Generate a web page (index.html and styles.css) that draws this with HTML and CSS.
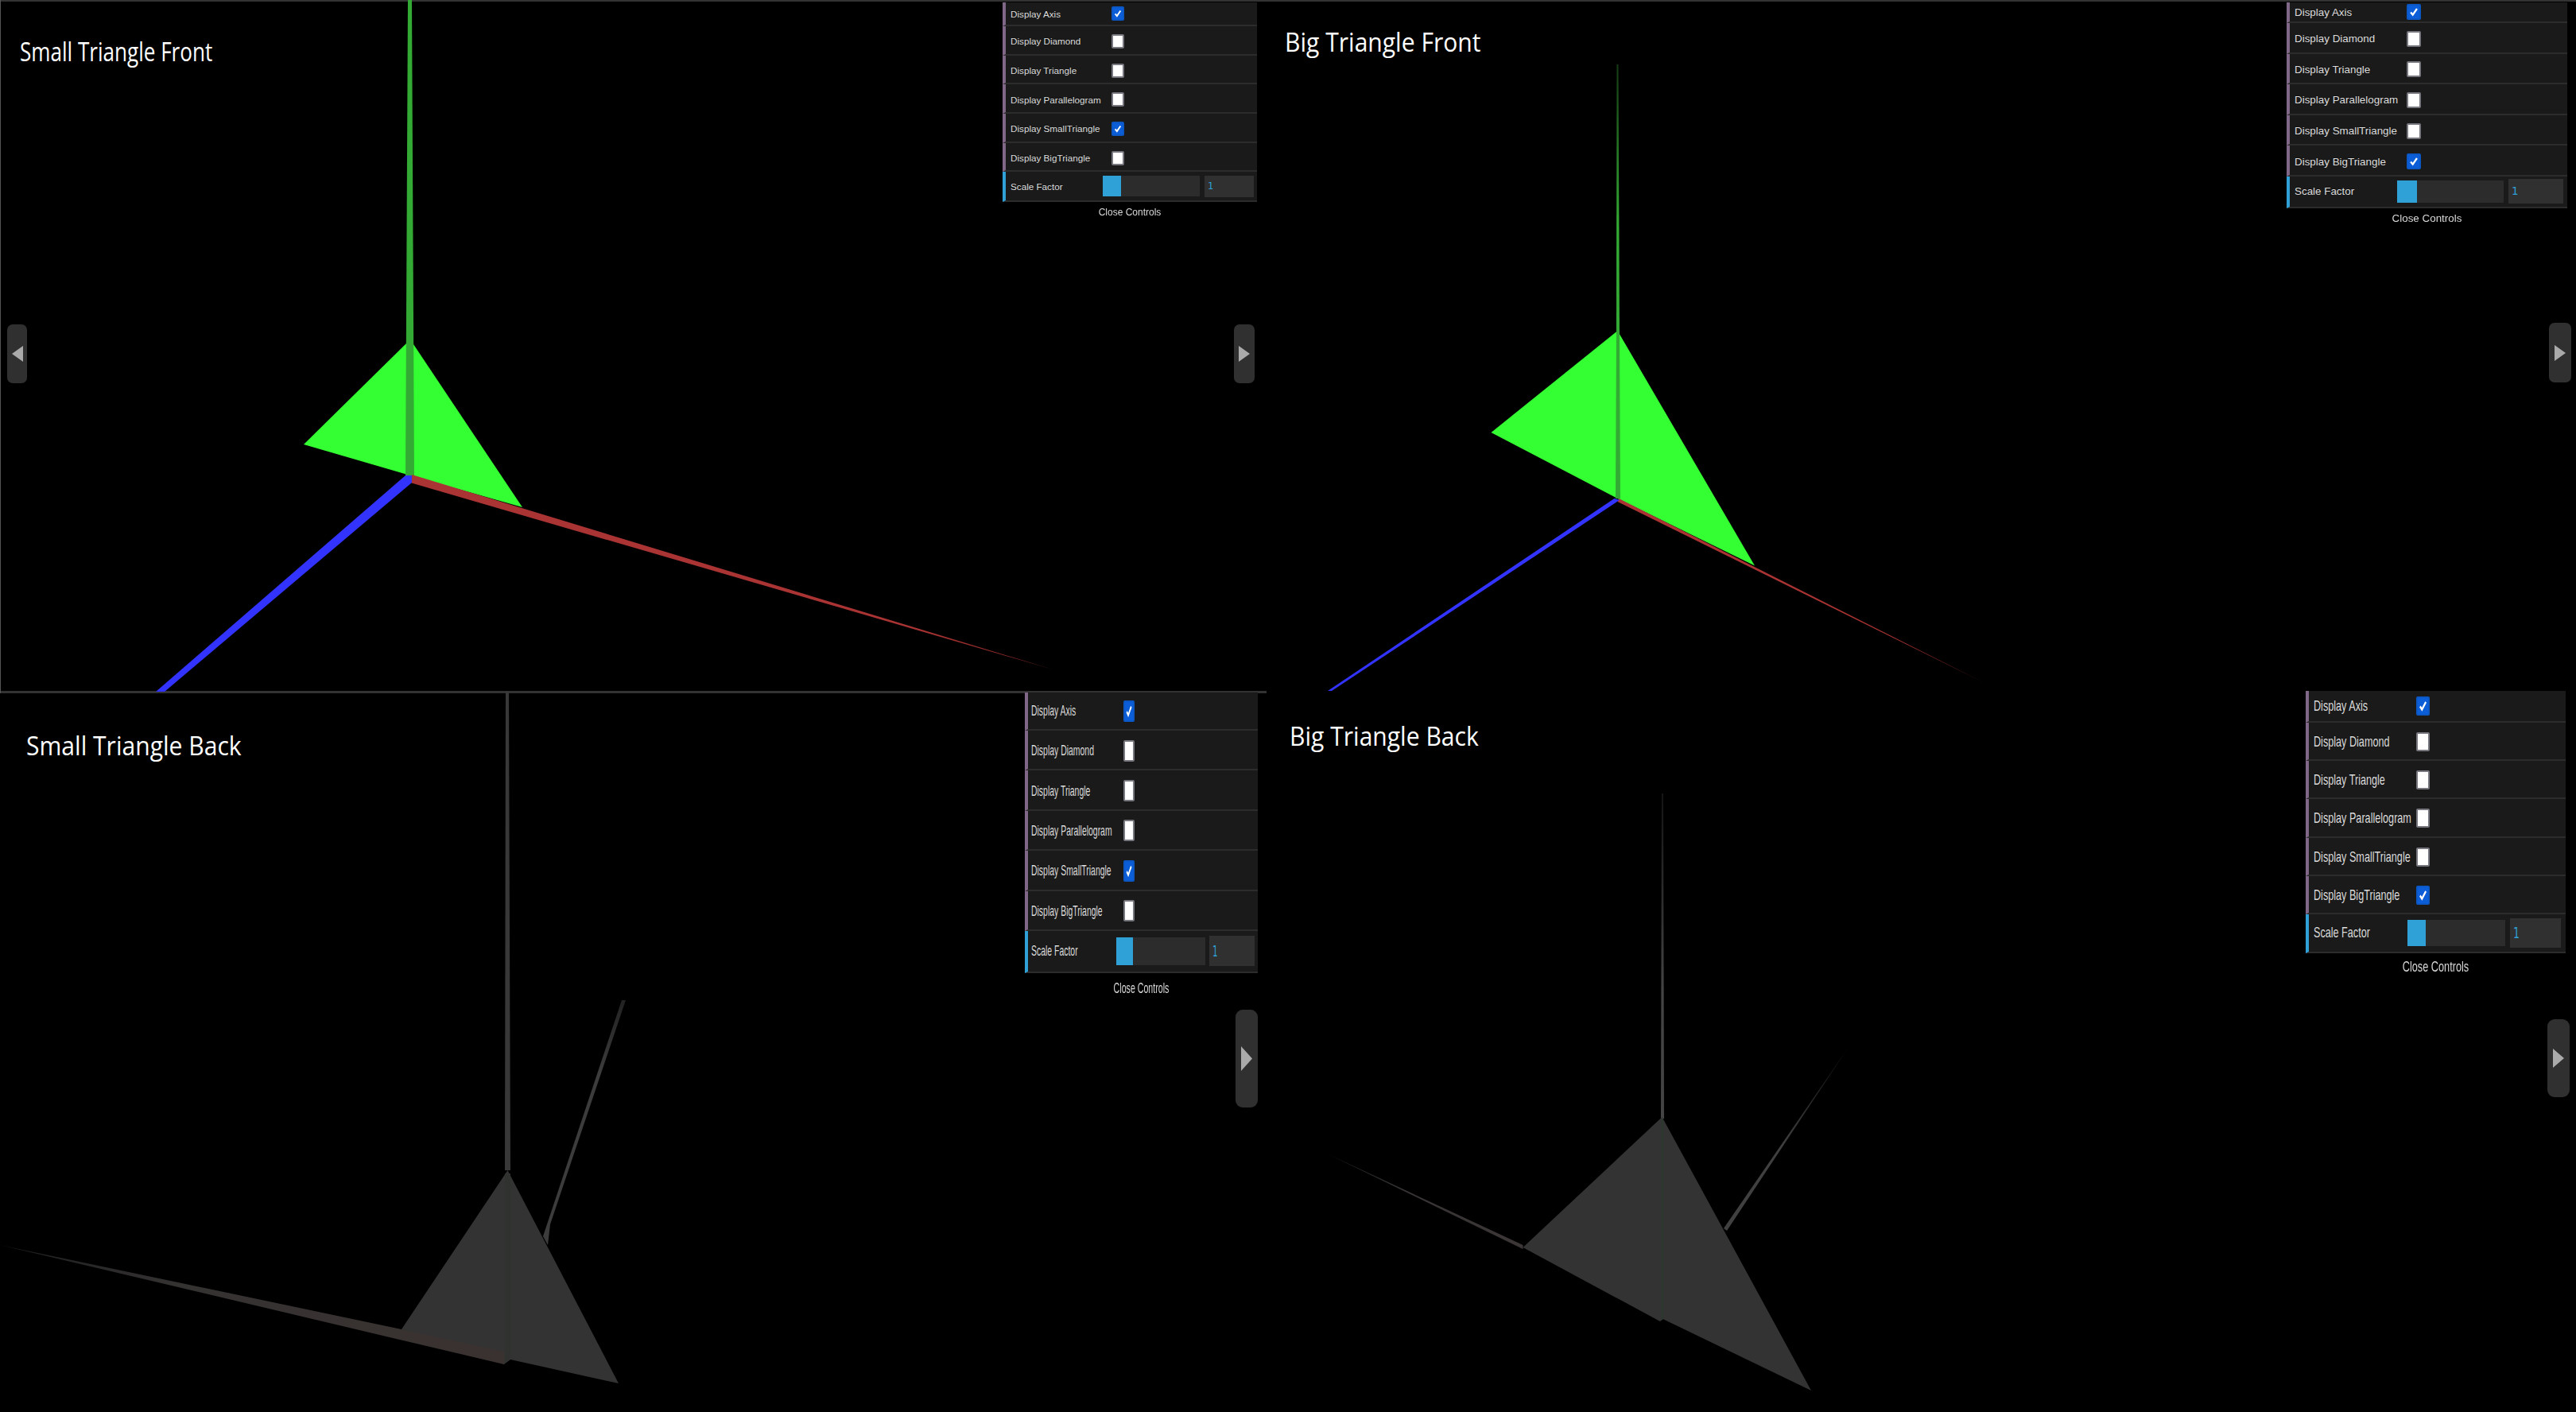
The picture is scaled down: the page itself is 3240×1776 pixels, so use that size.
FILE: index.html
```html
<!DOCTYPE html>
<html lang="en">
<head>
<meta charset="utf-8">
<title>Triangle views</title>
<link rel="stylesheet" href="styles.css">
</head>
<body>
<main class="quad">

<section class="pane pane-a">
  <svg class="scene" viewBox="0 0 1593 872">
    <defs>
      <linearGradient id="redA" gradientUnits="userSpaceOnUse" x1="518" y1="600" x2="1322" y2="841"><stop offset="0.8" stop-color="#aa3333"/><stop offset="1" stop-color="#7a2222"/></linearGradient>
    </defs>
    <polygon class="tri-green" points="516,427 657,638 516,598 382,559"/>
    <polygon class="axis-green" points="513,0 518,0 521,598 510,598"/>
    <polygon fill="url(#redA)" points="518,597 1324,842 516,607"/>
    <polygon class="axis-blue" points="510,598 518,598 518,607 207,870 196,870"/>
  </svg>
  <h2 class="title title-a">Small Triangle Front</h2>
  <span class="nav nav-a1"><svg viewBox="0 0 10 10" preserveAspectRatio="none"><polygon points="10,0 10,10 0,5"/></svg></span>
  <span class="nav nav-a2"><svg viewBox="0 0 10 10" preserveAspectRatio="none"><polygon points="0,0 0,10 10,5"/></svg></span>
  <aside class="gui gui-a">
    <div class="row"><span class="label">Display Axis</span><span class="check on"><svg viewBox="0 0 16 18" preserveAspectRatio="none"><polyline points="3.5,9.5 6.5,13 12.5,4.5"/></svg></span></div>
    <div class="row"><span class="label">Display Diamond</span><span class="check"></span></div>
    <div class="row"><span class="label">Display Triangle</span><span class="check"></span></div>
    <div class="row"><span class="label">Display Parallelogram</span><span class="check"></span></div>
    <div class="row"><span class="label">Display SmallTriangle</span><span class="check on"><svg viewBox="0 0 16 18" preserveAspectRatio="none"><polyline points="3.5,9.5 6.5,13 12.5,4.5"/></svg></span></div>
    <div class="row"><span class="label">Display BigTriangle</span><span class="check"></span></div>
    <div class="row scale"><span class="label">Scale Factor</span><span class="slider"><span class="fill"></span></span><span class="num"><span class="num-text">1</span></span></div>
    <div class="close">Close Controls</div>
  </aside>
</section>

<section class="pane pane-b">
  <svg class="scene" viewBox="1593 0 1647 872">
    <defs>
      <linearGradient id="greenB" gradientUnits="userSpaceOnUse" x1="2034" y1="81" x2="2034" y2="418"><stop offset="0" stop-color="#143a14"/><stop offset="0.6" stop-color="#33aa33"/></linearGradient>
      <linearGradient id="redB" gradientUnits="userSpaceOnUse" x1="2036" y1="627" x2="2490" y2="856"><stop offset="0.75" stop-color="#aa3333"/><stop offset="1" stop-color="#601a1a"/></linearGradient>
    </defs>
    <polygon class="tri-green" points="2034.5,416 2207,711.5 2034.5,627 1875.5,544"/>
    <polygon fill="url(#greenB)" points="2033.5,81 2035.5,81 2037,418 2033,418"/>
    <polygon class="axis-green" points="2033,418 2037,418 2038,627 2032,627"/>
    <polygon fill="url(#redB)" points="2036,627 2496,859 2034.5,631"/>
    <polygon class="axis-blue" points="2030.5,627 2037,629 1675,869 1670,869"/>
  </svg>
  <h2 class="title title-b">Big Triangle Front</h2>
  <span class="nav nav-b"><svg viewBox="0 0 10 10" preserveAspectRatio="none"><polygon points="0,0 0,10 10,5"/></svg></span>
  <aside class="gui gui-b">
    <div class="row"><span class="label">Display Axis</span><span class="check on"><svg viewBox="0 0 16 18" preserveAspectRatio="none"><polyline points="3.5,9.5 6.5,13 12.5,4.5"/></svg></span></div>
    <div class="row"><span class="label">Display Diamond</span><span class="check"></span></div>
    <div class="row"><span class="label">Display Triangle</span><span class="check"></span></div>
    <div class="row"><span class="label">Display Parallelogram</span><span class="check"></span></div>
    <div class="row"><span class="label">Display SmallTriangle</span><span class="check"></span></div>
    <div class="row"><span class="label">Display BigTriangle</span><span class="check on"><svg viewBox="0 0 16 18" preserveAspectRatio="none"><polyline points="3.5,9.5 6.5,13 12.5,4.5"/></svg></span></div>
    <div class="row scale"><span class="label">Scale Factor</span><span class="slider"><span class="fill"></span></span><span class="num"><span class="num-text">1</span></span></div>
    <div class="close">Close Controls</div>
  </aside>
</section>

<section class="pane pane-c">
  <svg class="scene" viewBox="0 872 1593 904">
    <defs>
      <linearGradient id="redC" gradientUnits="userSpaceOnUse" x1="0" y1="1567" x2="634" y2="1716"><stop offset="0" stop-color="#1c1c1c"/><stop offset="0.35" stop-color="#353232"/><stop offset="1" stop-color="#3a3230"/></linearGradient>
      <linearGradient id="blueC" gradientUnits="userSpaceOnUse" x1="785" y1="1258" x2="689" y2="1566"><stop offset="0" stop-color="#222222"/><stop offset="0.3" stop-color="#3c3c3c"/></linearGradient>
    </defs>
    <polygon fill="url(#blueC)" points="787,1258 692,1540 689,1566 683,1555 782,1258"/>
    <polygon class="axis-grey" points="636,870 640,870 642,1472 635,1472"/>
    <polygon class="tri-grey" points="638.5,1472 778,1740 642,1710 634,1716 505,1672"/>
    <polygon fill="url(#redC)" points="0,1566 505,1672 634,1700 634,1716"/>
    <polygon class="axis-inner" points="635,1476 642,1476 642,1708 635,1712"/>
  </svg>
  <h2 class="title title-c">Small Triangle Back</h2>
  <span class="nav nav-c"><svg viewBox="0 0 10 10" preserveAspectRatio="none"><polygon points="0,0 0,10 10,5"/></svg></span>
  <aside class="gui gui-c">
    <div class="row"><span class="label">Display Axis</span><span class="check on"><svg viewBox="0 0 16 18" preserveAspectRatio="none"><polyline points="3.5,9.5 6.5,13 12.5,4.5"/></svg></span></div>
    <div class="row"><span class="label">Display Diamond</span><span class="check"></span></div>
    <div class="row"><span class="label">Display Triangle</span><span class="check"></span></div>
    <div class="row"><span class="label">Display Parallelogram</span><span class="check"></span></div>
    <div class="row"><span class="label">Display SmallTriangle</span><span class="check on"><svg viewBox="0 0 16 18" preserveAspectRatio="none"><polyline points="3.5,9.5 6.5,13 12.5,4.5"/></svg></span></div>
    <div class="row"><span class="label">Display BigTriangle</span><span class="check"></span></div>
    <div class="row scale"><span class="label">Scale Factor</span><span class="slider"><span class="fill"></span></span><span class="num"><span class="num-text">1</span></span></div>
    <div class="close">Close Controls</div>
  </aside>
</section>

<section class="pane pane-d">
  <svg class="scene" viewBox="1593 872 1647 904">
    <defs>
      <linearGradient id="greyD" gradientUnits="userSpaceOnUse" x1="2091" y1="998" x2="2091" y2="1407"><stop offset="0" stop-color="#141414"/><stop offset="0.6" stop-color="#444"/></linearGradient>
      <linearGradient id="blueD" gradientUnits="userSpaceOnUse" x1="2324" y1="1317" x2="2170" y2="1547"><stop offset="0" stop-color="#111111"/><stop offset="0.55" stop-color="#404040"/></linearGradient>
      <linearGradient id="redD" gradientUnits="userSpaceOnUse" x1="1672" y1="1453" x2="1915" y2="1569"><stop offset="0" stop-color="#222222"/><stop offset="0.4" stop-color="#383434"/><stop offset="1" stop-color="#3c3636"/></linearGradient>
    </defs>
    <polygon fill="url(#blueD)" points="2325,1317 2172,1548 2168,1545"/>
    <polygon fill="url(#greyD)" points="2090,998 2092,998 2093,1407 2089,1407"/>
    <polygon fill="url(#redD)" points="1671,1452 1915.5,1566 1915.5,1571"/>
    <polygon class="tri-grey" points="2090.5,1405 2278,1749 2091.5,1659 2088,1662 1915.5,1569"/>
    <polygon class="axis-inner-d" points="2089.5,1407 2092,1407 2092,1659 2089.5,1661"/>
  </svg>
  <h2 class="title title-d">Big Triangle Back</h2>
  <span class="nav nav-d"><svg viewBox="0 0 10 10" preserveAspectRatio="none"><polygon points="0,0 0,10 10,5"/></svg></span>
  <aside class="gui gui-d">
    <div class="row"><span class="label">Display Axis</span><span class="check on"><svg viewBox="0 0 16 18" preserveAspectRatio="none"><polyline points="3.5,9.5 6.5,13 12.5,4.5"/></svg></span></div>
    <div class="row"><span class="label">Display Diamond</span><span class="check"></span></div>
    <div class="row"><span class="label">Display Triangle</span><span class="check"></span></div>
    <div class="row"><span class="label">Display Parallelogram</span><span class="check"></span></div>
    <div class="row"><span class="label">Display SmallTriangle</span><span class="check"></span></div>
    <div class="row"><span class="label">Display BigTriangle</span><span class="check on"><svg viewBox="0 0 16 18" preserveAspectRatio="none"><polyline points="3.5,9.5 6.5,13 12.5,4.5"/></svg></span></div>
    <div class="row scale"><span class="label">Scale Factor</span><span class="slider"><span class="fill"></span></span><span class="num"><span class="num-text">1</span></span></div>
    <div class="close">Close Controls</div>
  </aside>
</section>

</main>
</body>
</html>
```
FILE: styles.css
```css
* { box-sizing: border-box; }
html, body { margin: 0; padding: 0; background: #000; }
body { width: 3240px; height: 1776px; overflow: hidden; font-family: "Liberation Sans", Arial, sans-serif; }

.quad {
  display: grid;
  grid-template-columns: 1593px 1647px;
  grid-template-rows: 872px 904px;
  width: 3240px;
  height: 1776px;
}

.pane { position: relative; background: #000; }
.pane-a { box-shadow: inset 1px 0 #555, inset 0 2px #333, inset 0 -3px #333; }
.pane-b { box-shadow: inset 0 2px #333; }

.scene { position: absolute; inset: 0; width: 100%; height: 100%; overflow: visible; }
.tri-green { fill: #33ff33; }
.axis-green { fill: #33aa33; }
.axis-blue { fill: #3333ff; }
.tri-grey { fill: #333333; }
.axis-grey { fill: #383838; }
.axis-inner { fill: #2f322f; }
.axis-inner-d { fill: #2c382f; }

.title {
  position: absolute;
  margin: 0;
  font: 400 32px/40px "Open Sans", "Noto Sans", sans-serif;
  color: #fff;
  white-space: nowrap;
  transform: scaleX(0.94);
  transform-origin: left center;
}
.title-a { left: 25px; top: 45px; transform: scaleX(0.815); }
.title-b { left: 23px; top: 33px; }
.title-c { left: 33px; top: 46px; }
.title-d { left: 29px; top: 34px; }

.nav { position: absolute; display: flex; align-items: center; justify-content: center; background: #303030; border-radius: 7px; }
.nav svg { display: block; width: 14px; height: 20px; }
.nav polygon { fill: #aaaaaa; }
.nav-a1 { left: 9px; top: 408px; width: 25px; height: 74px; }
.nav-a2 { left: 1552px; top: 408px; width: 26px; height: 74px; }
.nav-b { left: 1613px; top: 406px; width: 28px; height: 75px; }
.nav-c { left: 1554px; top: 398px; width: 28px; height: 123px; border-radius: 9px; }
.nav-c svg { height: 31px; }
.nav-d { left: 1611px; top: 410px; width: 28px; height: 98px; border-radius: 9px; }
.nav-d svg { height: 24px; }

.gui { position: absolute; width: var(--w); left: var(--x); top: var(--y); font-size: var(--fs); color: #dddddd; filter: blur(0.3px); }

.row {
  display: grid;
  grid-template-columns: var(--lw) auto;
  align-items: center;
  height: var(--rh);
  padding-left: var(--pad);
  padding-top: var(--pt);
  background: #1a1a1a;
  border-left: 4px solid #806787;
  border-bottom: 2px solid #2c2c2c;
}
.row:first-child { height: var(--first); padding-top: 0; }
.row.scale {
  grid-template-columns: var(--lw2) var(--sw) var(--nw);
  column-gap: var(--gap);
  height: var(--sh);
  padding-top: 0;
  border-left-color: #2fa1d6;
}

.label {
  display: block;
  white-space: nowrap;
  text-shadow: 0 -1px 0 #111;
  transform: scaleX(var(--sx));
  transform-origin: left center;
}
.scale .label { margin-right: calc(0px - var(--gap)); }

.check {
  display: block;
  width: var(--cw);
  height: var(--ch);
  background: #ffffff;
  border: 2px solid #77777f;
  border-radius: 2px;
}
.check.on { background: #0b5ed7; border-color: #0b57c4; }
.check svg { display: block; width: 100%; height: 100%; }
.check polyline { fill: none; stroke: #ffffff; stroke-width: 2.6; }

.slider { display: block; height: var(--sh2); background: #2c2c2c; }
.fill { display: block; width: var(--fw); height: 100%; background: #2fa1d6; }
.num {
  display: block;
  height: var(--nh);
  padding-left: 4px;
  background: #303030;
  color: #2fa1d6;
  font-family: "DejaVu Sans", sans-serif;
  line-height: var(--nh);
}
.num-text { display: inline-block; transform: scaleX(var(--sx)); transform-origin: left center; }

.close {
  height: 26px;
  margin-top: var(--cm);
  line-height: 26px;
  text-align: center;
  white-space: nowrap;
  color: #d8d8d8;
  font-size: var(--cfs);
  transform: scaleX(var(--csx));
}

.gui-a { --x: 1261px; --y: 3px; --w: 320px; --fs: 11.7px; --sx: 1; --pad: 6px; --pt: 3px; --first: 30px; --rh: 36.7px; --sh: 38px; --lw: 127px; --lw2: 110px; --gap: 6px; --sw: 122px; --sh2: 26px; --nw: 62px; --nh: 27px; --fw: 23px; --cw: 16px; --ch: 18px; --cfs: 12px; --csx: 1; --cm: 0px; }
.gui-b { --x: 1283px; --y: 3px; --w: 353px; --fs: 13.4px; --sx: 1; --pad: 6px; --pt: 3px; --first: 26px; --rh: 38.6px; --sh: 40px; --lw: 141px; --lw2: 123px; --gap: 6px; --sw: 134px; --sh2: 28px; --nw: 69px; --nh: 31px; --fw: 25px; --cw: 18px; --ch: 20px; --cfs: 13.4px; --csx: 1; --cm: 0px; }
.gui-c { --x: 1289px; --y: -1px; --w: 293px; --fs: 19px; --sx: 0.55; --pad: 4px; --pt: 2px; --first: 48px; --rh: 50.4px; --sh: 53px; --lw: 116px; --lw2: 102px; --gap: 5px; --sw: 112px; --sh2: 35px; --nw: 57px; --nh: 38px; --fw: 21px; --cw: 14px; --ch: 27px; --cfs: 19px; --csx: 0.56; --cm: 6px; }
.gui-d { --x: 1307px; --y: -3px; --w: 327px; --fs: 19px; --sx: 0.665; --pad: 6px; --pt: 2px; --first: 40px; --rh: 48.2px; --sh: 49px; --lw: 129px; --lw2: 112px; --gap: 6px; --sw: 123px; --sh2: 33px; --nw: 64px; --nh: 37px; --fw: 23px; --cw: 17px; --ch: 24px; --cfs: 19px; --csx: 0.67; --cm: 4px; }
```
